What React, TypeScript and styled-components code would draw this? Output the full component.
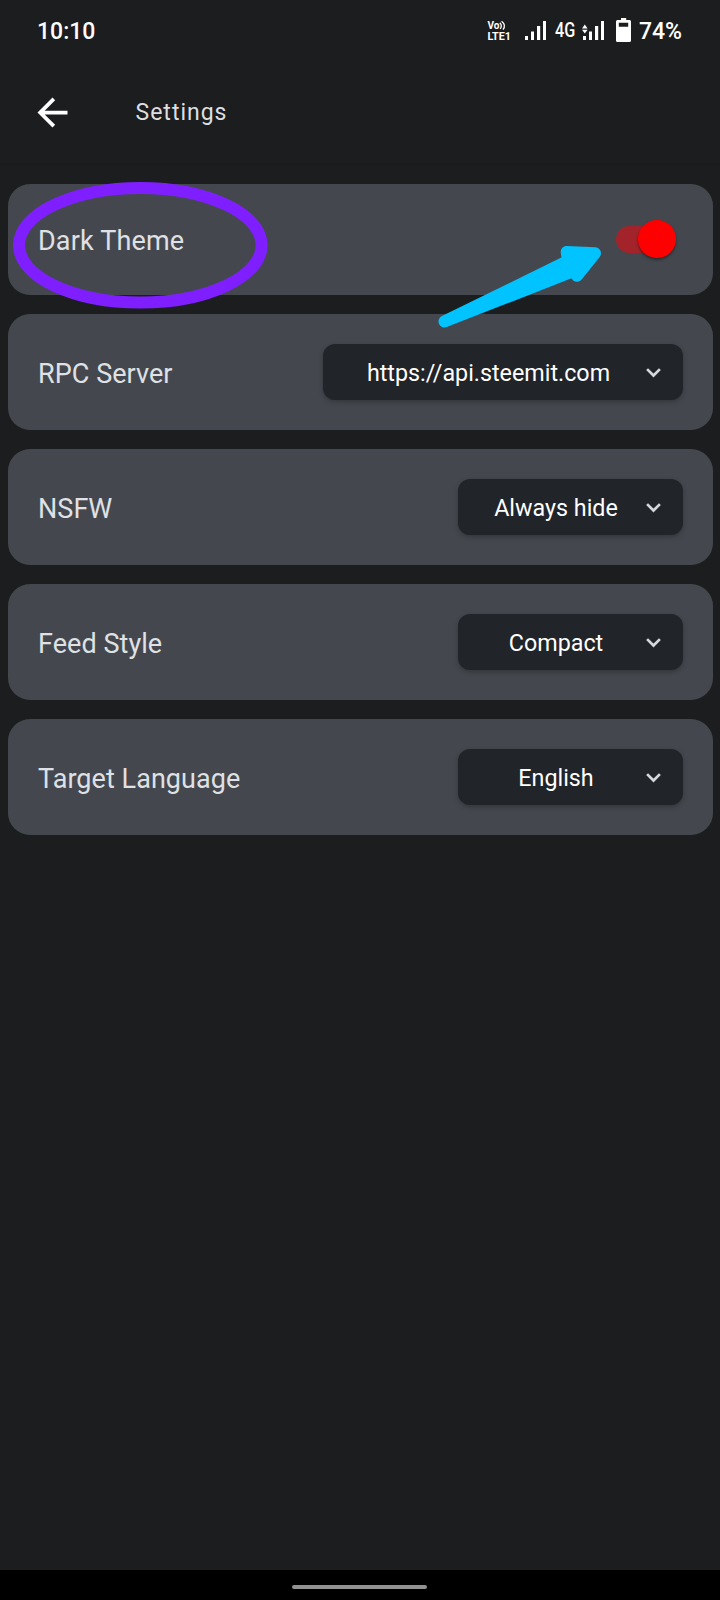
import React from "react";
import styled, { createGlobalStyle } from "styled-components";

const GlobalStyle = createGlobalStyle`
  *, *::before, *::after { box-sizing: border-box; }
  body { margin: 0; background: #1c1d1f; font-family: Roboto, sans-serif; }
`;

const Screen = styled.div`
  position: relative;
  display: flex;
  flex-direction: column;
  width: 720px;
  height: 1600px;
  overflow: hidden;
  background: #1b1d1e;
  color: #fff;
`;

const StatusBar = styled.div`
  display: flex;
  align-items: center;
  justify-content: space-between;
  height: 62px;
  padding: 0 38px 0 37px;
`;

const StatusText = styled.span`
  padding-top: 2px;
  font-size: 23px;
  font-weight: 500;
  line-height: 28px;
`;

const StatusIcons = styled.div`
  display: flex;
  align-items: center;
  & > svg { display: block; flex: none; }
`;

const Network = styled.span`
  width: 21px;
  margin: 0 6px 0 8px;
  font-size: 19.5px;
  font-weight: 500;
  line-height: 24px;
  white-space: nowrap;
  transform: scaleX(0.83);
  transform-origin: left;
`;

const SignalGap = styled.span`
  width: 12px;
`;

const BatteryBox = styled.span`
  display: flex;
  margin: 0 8px 2px 11px;
`;

const AppBar = styled.header`
  display: flex;
  align-items: center;
  height: 103px;
  padding: 0 30px;
  border-bottom: 1px solid #191a1c;
`;

const BackButton = styled.button`
  display: flex;
  padding: 0;
  margin-bottom: 2px;
  border: 0;
  background: none;
  color: #fff;
`;

const Title = styled.h1`
  margin: 0 0 0 60.5px;
  color: #dedfe1;
  font-size: 23px;
  font-weight: 400;
  line-height: 30px;
  letter-spacing: 1px;
`;

const SettingsList = styled.main`
  display: flex;
  flex: 1;
  flex-direction: column;
  gap: 19px;
  padding: 19px 7px 0 8px;
`;

const Card = styled.section<{ $height?: number }>`
  display: flex;
  align-items: center;
  justify-content: space-between;
  height: ${({ $height = 116 }) => $height}px;
  padding: 0 30px;
  border-radius: 22px;
  background: #44484e;
`;

const Label = styled.span<{ $raised?: boolean }>`
  padding-top: ${({ $raised }) => ($raised ? 2 : 4)}px;
  color: #dfe1e5;
  font-size: 27px;
  line-height: 32px;
  letter-spacing: ${({ $raised }) => ($raised ? 0.15 : 0.05)}px;
`;

const Select = styled.button<{ $width?: number }>`
  display: flex;
  align-items: center;
  width: ${({ $width = 225 }) => $width}px;
  height: 56px;
  padding: 0 15px;
  border: 0;
  border-radius: 12px;
  background: #212429;
  box-shadow: 0 2px 5px rgba(0, 0, 0, 0.25);
  color: #fff;
  font: 400 23.3px/28px Roboto, sans-serif;
  & > svg { display: block; flex: none; }
`;

const SelectValue = styled.span`
  flex: 1;
  padding-top: 2px;
  text-align: center;
  white-space: nowrap;
`;

const SwitchTrack = styled.span`
  display: flex;
  align-items: center;
  justify-content: flex-end;
  width: 60px;
  height: 27px;
  margin: 0 7px 1px 0;
  border-radius: 14px;
  background: linear-gradient(90deg, #a2242a 48px, transparent 48px);
`;

const SwitchThumb = styled.span`
  width: 38px;
  height: 38px;
  border-radius: 50%;
  background: #ff0000;
  box-shadow: 0 2px 3px rgba(0, 0, 0, 0.4);
`;

const NavBar = styled.footer`
  display: flex;
  align-items: center;
  justify-content: center;
  height: 30px;
  padding: 4px 1px 0 0;
  background: #000;
`;

const HomeHandle = styled.span`
  width: 135px;
  height: 4px;
  border-radius: 2px;
  background: #929292;
`;

const Markup = styled.svg`
  position: absolute;
  top: 0;
  left: 0;
  pointer-events: none;
`;

const VolteIcon = () => (
  <svg width="25" height="24" viewBox="0 -2 25 24" fill="#fff" fontFamily="Roboto, sans-serif" fontWeight="700">
    <text x="0.5" y="8" fontSize="10.5" textLength="12" lengthAdjust="spacingAndGlyphs">Vo</text>
    <text x="0.5" y="19" fontSize="10.5" textLength="23.5" lengthAdjust="spacingAndGlyphs">LTE1</text>
    <path d="M12.800 1.800q2.800 2.800 0.400 6.200M14.600 0.200q4.800 3.800 1.400 8.400" fill="none" stroke="#fff" strokeWidth="1.3" />
  </svg>
);

const SignalIcon = ({ data = false }: { data?: boolean }) => (
  <svg width="23" height="20" viewBox="0 0 23 20" fill="#fff">
    <path d="M1 15h3v4H1zM7 10.5h3V19H7zM13 5h3.2v14H13zM19 0h3v19h-3z" />
    {data && <path d="M0 7.5 2.8 3.6 5.6 7.5zM0 8.7h5.6L2.8 12.6z" />}
  </svg>
);

const BatteryIcon = () => (
  <svg width="15" height="24" viewBox="0 0 15 24" fill="#fff">
    <path
      fillRule="evenodd"
      d="M5 0h5.2v2H13.500a1.500 1.500 0 0 1 1.500 1.500v19a1.500 1.500 0 0 1-1.500 1.500h-12A1.500 1.500 0 0 1 0 22.500v-19A1.500 1.500 0 0 1 1.500 2H5zM2.800 4.800v4h9.400v-4z"
    />
  </svg>
);

const BackIcon = () => (
  <svg width="45" height="45" viewBox="0 0 24 24" fill="currentColor">
    <path d="M20 11H7.830l5.590-5.590L12 4l-8 8 8 8 1.410-1.410L7.830 13H20z" />
  </svg>
);

const ChevronIcon = () => (
  <svg width="29" height="29" viewBox="0 0 24 24" fill="none" stroke="#d6d8dc" strokeWidth="2.2">
    <path d="M6.700 9.200 12 14.500l5.300-5.300" />
  </svg>
);

const options = [
  { label: "RPC Server", value: "https://api.steemit.com", width: 360 },
  { label: "NSFW", value: "Always hide" },
  { label: "Feed Style", value: "Compact" },
  { label: "Target Language", value: "English" },
];

export default function App() {
  return (
    <>
      <GlobalStyle />
      <Screen>
        <StatusBar>
          <StatusText>10:10</StatusText>
          <StatusIcons>
            <VolteIcon />
            <SignalGap />
            <SignalIcon />
            <Network>4G</Network>
            <SignalIcon data />
            <BatteryBox>
              <BatteryIcon />
            </BatteryBox>
            <StatusText>74%</StatusText>
          </StatusIcons>
        </StatusBar>
        <AppBar>
          <BackButton aria-label="Back">
            <BackIcon />
          </BackButton>
          <Title>Settings</Title>
        </AppBar>
        <SettingsList>
          <Card $height={111}>
            <Label $raised>Dark Theme</Label>
            <SwitchTrack role="switch" aria-checked="true">
              <SwitchThumb />
            </SwitchTrack>
          </Card>
          {options.map((option) => (
            <Card key={option.label}>
              <Label>{option.label}</Label>
              <Select $width={option.width}>
                <SelectValue>{option.value}</SelectValue>
                <ChevronIcon />
              </Select>
            </Card>
          ))}
        </SettingsList>
        <NavBar>
          <HomeHandle />
        </NavBar>
        <Markup width="720" height="340" viewBox="0 0 720 340">
          <ellipse cx="140.300" cy="245.200" rx="121.300" ry="57.300" fill="none" stroke="#7f1fff" strokeWidth="12" />
          <path
            d="M444.500 321.500 568 261 566.700 251.900 595 253.200 577 275.700 572.500 271.500z"
            fill="#00c3ff"
            stroke="#00c3ff"
            strokeWidth="12"
            strokeLinejoin="round"
          />
        </Markup>
      </Screen>
    </>
  );
}
